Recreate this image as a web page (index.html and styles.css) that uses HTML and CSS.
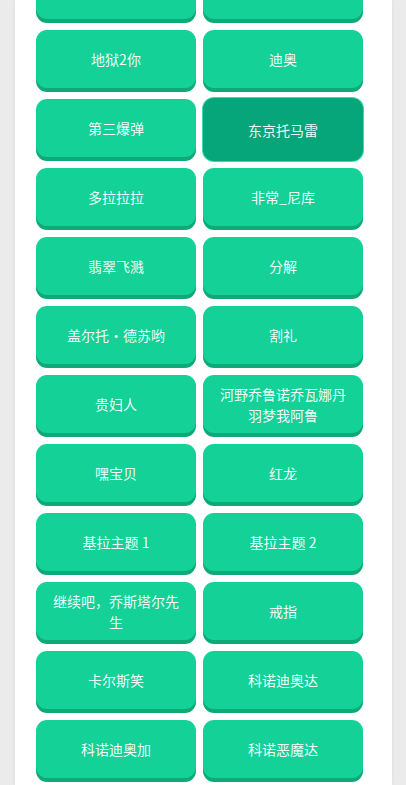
FILE: index.html
```html
<!DOCTYPE html>
<html lang="zh">
<head>
<meta charset="utf-8">
<title>音效</title>
<link rel="stylesheet" href="styles.css">
</head>
<body>
<div class="panel">
  <div class="grid">
    <button class="btn"></button>
    <button class="btn"></button>
    <button class="btn">地狱2你</button>
    <button class="btn">迪奥</button>
    <button class="btn">第三爆弹</button>
    <button class="btn pressed">东京托马雷</button>
    <button class="btn">多拉拉拉</button>
    <button class="btn">非常_尼库</button>
    <button class="btn">翡翠飞溅</button>
    <button class="btn">分解</button>
    <button class="btn">盖尔托・德苏哟</button>
    <button class="btn">割礼</button>
    <button class="btn">贵妇人</button>
    <button class="btn">河野乔鲁诺乔瓦娜丹羽梦我阿鲁</button>
    <button class="btn">嘿宝贝</button>
    <button class="btn">红龙</button>
    <button class="btn">基拉主题 1</button>
    <button class="btn">基拉主题 2</button>
    <button class="btn">继续吧，乔斯塔尔先生</button>
    <button class="btn">戒指</button>
    <button class="btn">卡尔斯笑</button>
    <button class="btn">科诺迪奥达</button>
    <button class="btn">科诺迪奥加</button>
    <button class="btn">科诺恶魔达</button>
  </div>
</div>
</body>
</html>
```
FILE: styles.css
```css
html, body {
  margin: 0;
  padding: 0;
  height: 100%;
  overflow: hidden;
}
body {
  background: #ebebeb;
  font-family: "Noto Sans CJK SC", "Noto Sans", sans-serif;
}
.panel {
  display: flow-root;
  margin-left: 15px;
  width: 377px;
  min-height: 100%;
  box-sizing: border-box;
  background: #ffffff;
  padding: 0 29px 0 21px;
  box-shadow: 0 0 4px rgba(0, 0, 0, 0.07);
}
.grid {
  display: grid;
  grid-template-columns: 160px 160px;
  column-gap: 7px;
  row-gap: 11px;
  margin-top: -39px;
  align-items: start;
}
.btn {
  height: 58px;
  border: none;
  border-radius: 11px;
  background: #14d198;
  box-shadow: 0 4px 0 #0fa877;
  color: rgba(255, 255, 255, 0.95);
  font-family: inherit;
  font-size: 14px;
  line-height: 21px;
  padding: 1px 12px 0;
  text-align: center;
}
.btn.pressed {
  height: 63px;
  margin-top: -1px;
  margin-bottom: -4px;
  background: #07a67a;
  box-shadow: 0 0 0 1px #3ddba9;
}
```
